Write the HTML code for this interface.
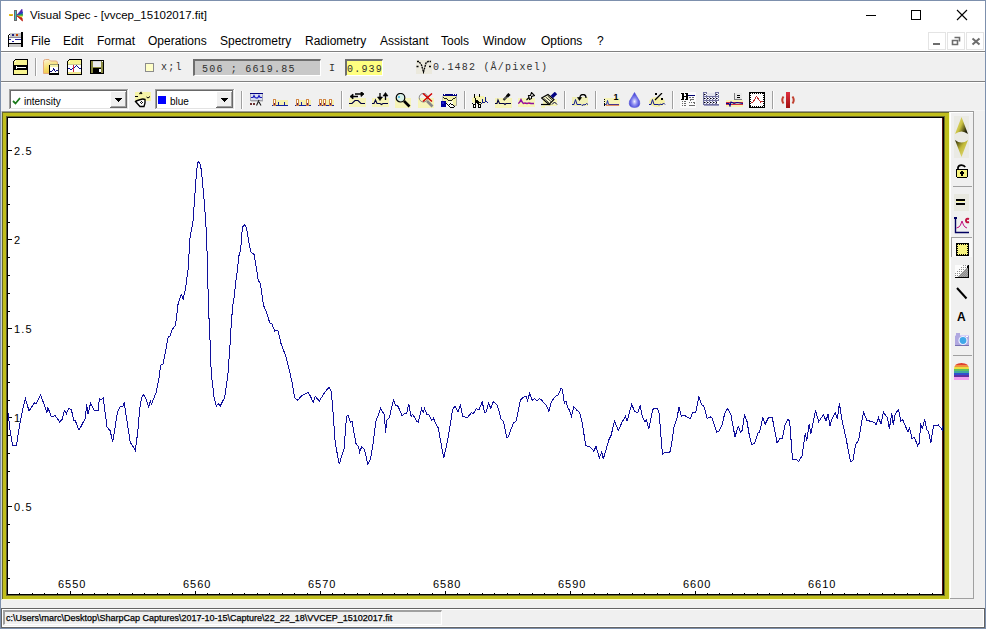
<!DOCTYPE html><html><head><meta charset="utf-8"><style>html,body{margin:0;padding:0;}body{width:986px;height:629px;position:relative;overflow:hidden;background:#f0f0f0;font-family:"Liberation Sans",sans-serif;}</style></head><body>
<div style="position:absolute;left:0px;top:0px;width:986px;height:51px;background:#fff;"></div>
<div style="position:absolute;left:0px;top:51px;width:986px;height:1px;background:#808080;"></div>
<div style="position:absolute;left:0px;top:52px;width:986px;height:1px;background:#fff;"></div>
<div style="position:absolute;left:0px;top:81px;width:986px;height:1px;background:#808080;"></div>
<div style="position:absolute;left:0px;top:82px;width:986px;height:1px;background:#fff;"></div>
<div style="position:absolute;left:0px;top:110px;width:986px;height:1px;background:#f4f4f4;"></div>
<div style="position:absolute;left:30px;top:10px;font-family:'Liberation Sans', sans-serif;font-size:11.5px;line-height:1;color:#000;white-space:pre;">Visual Spec - [vvcep_15102017.fit]</div>
<div style="position:absolute;left:31px;top:35px;font-family:'Liberation Sans', sans-serif;font-size:12px;line-height:1;color:#000;white-space:pre;">File</div>
<div style="position:absolute;left:63px;top:35px;font-family:'Liberation Sans', sans-serif;font-size:12px;line-height:1;color:#000;white-space:pre;">Edit</div>
<div style="position:absolute;left:97px;top:35px;font-family:'Liberation Sans', sans-serif;font-size:12px;line-height:1;color:#000;white-space:pre;">Format</div>
<div style="position:absolute;left:148px;top:35px;font-family:'Liberation Sans', sans-serif;font-size:12px;line-height:1;color:#000;white-space:pre;">Operations</div>
<div style="position:absolute;left:220px;top:35px;font-family:'Liberation Sans', sans-serif;font-size:12px;line-height:1;color:#000;white-space:pre;">Spectrometry</div>
<div style="position:absolute;left:305px;top:35px;font-family:'Liberation Sans', sans-serif;font-size:12px;line-height:1;color:#000;white-space:pre;">Radiometry</div>
<div style="position:absolute;left:380px;top:35px;font-family:'Liberation Sans', sans-serif;font-size:12px;line-height:1;color:#000;white-space:pre;">Assistant</div>
<div style="position:absolute;left:441px;top:35px;font-family:'Liberation Sans', sans-serif;font-size:12px;line-height:1;color:#000;white-space:pre;">Tools</div>
<div style="position:absolute;left:483px;top:35px;font-family:'Liberation Sans', sans-serif;font-size:12px;line-height:1;color:#000;white-space:pre;">Window</div>
<div style="position:absolute;left:541px;top:35px;font-family:'Liberation Sans', sans-serif;font-size:12px;line-height:1;color:#000;white-space:pre;">Options</div>
<div style="position:absolute;left:597px;top:35px;font-family:'Liberation Sans', sans-serif;font-size:12px;line-height:1;color:#000;white-space:pre;">?</div>
<div style="position:absolute;left:866px;top:15px;width:10px;height:1px;background:#000;"></div>
<div style="position:absolute;left:911px;top:10px;width:8px;height:8px;border:1px solid #000;"></div>
<svg style="position:absolute;left:956px;top:9px" width="12" height="12"><path d="M1 1 L11 11 M11 1 L1 11" stroke="#000" stroke-width="1.1"/></svg>
<div style="position:absolute;left:928px;top:32px;width:16px;height:16px;border:1px solid #e4e4e4;"></div>
<div style="position:absolute;left:947px;top:32px;width:16px;height:16px;border:1px solid #e4e4e4;"></div>
<div style="position:absolute;left:966px;top:32px;width:16px;height:16px;border:1px solid #e4e4e4;"></div>
<div style="position:absolute;left:933px;top:43px;width:7px;height:2px;background:#6d6d6d;"></div>
<svg style="position:absolute;left:951px;top:36px" width="10" height="10"><path d="M3.5 1.5 H8.5 V5.5 M1.5 4.5 H6.5 V8.5 H1.5 Z" fill="none" stroke="#6d6d6d" stroke-width="1.6"/></svg>
<svg style="position:absolute;left:971px;top:37px" width="10" height="9"><path d="M1.5 1.5 L8.5 7.5 M8.5 1.5 L1.5 7.5" stroke="#6d6d6d" stroke-width="2"/></svg>
<div style="position:absolute;left:35px;top:58px;width:1px;height:18px;background:#a0a0a0;"></div>
<div style="position:absolute;left:36px;top:58px;width:1px;height:18px;background:#fff;"></div>
<div style="position:absolute;left:145px;top:63px;width:7px;height:7px;border:1px solid #8c8c8c;background:#ffffc8;"></div>
<div style="position:absolute;left:161px;top:63px;font-family:'Liberation Mono', monospace;font-size:10px;line-height:1;color:#303030;white-space:pre;letter-spacing:1.2px;">x;l</div>
<div style="position:absolute;left:193px;top:59px;width:125px;height:14px;border-top:2px solid #6e6e6e;border-left:2px solid #6e6e6e;border-right:1px solid #fff;border-bottom:1px solid #fff;background:#c8c8c8;"></div>
<div style="position:absolute;left:202px;top:65px;font-family:'Liberation Mono', monospace;font-size:10px;line-height:1;color:#303030;white-space:pre;letter-spacing:1.2px;">506 ; 6619.85</div>
<div style="position:absolute;left:329px;top:64px;font-family:'Liberation Mono', monospace;font-size:10px;line-height:1;color:#303030;white-space:pre;">I</div>
<div style="position:absolute;left:345px;top:59px;width:35px;height:14px;border-top:2px solid #6e6e6e;border-left:2px solid #6e6e6e;border-right:1px solid #fff;border-bottom:1px solid #fff;background:#ffff80;"></div>
<div style="position:absolute;left:347px;top:65px;font-family:'Liberation Mono', monospace;font-size:10px;line-height:1;color:#303030;white-space:pre;letter-spacing:1.2px;">0.939</div>
<div style="position:absolute;left:433px;top:63px;font-family:'Liberation Mono', monospace;font-size:10px;line-height:1;color:#303030;white-space:pre;letter-spacing:1.2px;">0.1482 (Å/pixel)</div>
<div style="position:absolute;left:416px;top:60px;width:16px;height:14px;background:#ebe9dd;"></div>
<svg style="position:absolute;left:416px;top:60px" width="16" height="14"><path d="M0.5 6.5 L2.5 6.5 M1 1.5 L3 1.5 L5.5 5 L7.5 12 L10 3 L12 1.5 L15 1.5 M13 6.5 L15.5 6.5" stroke="#000" stroke-width="1.3" fill="none" stroke-dasharray="2 0.7"/></svg>
<div style="position:absolute;left:9px;top:89px;width:120px;height:21px;background:#fff;"></div>
<div style="position:absolute;left:9px;top:89px;width:119px;height:1px;background:#a0a0a0;"></div>
<div style="position:absolute;left:9px;top:89px;width:1px;height:20px;background:#a0a0a0;"></div>
<div style="position:absolute;left:10px;top:90px;width:117px;height:1px;background:#696969;"></div>
<div style="position:absolute;left:10px;top:90px;width:1px;height:18px;background:#696969;"></div>
<div style="position:absolute;left:10px;top:108px;width:118px;height:1px;background:#e3e3e3;"></div>
<div style="position:absolute;left:127px;top:90px;width:1px;height:19px;background:#e3e3e3;"></div>
<div style="position:absolute;left:110px;top:91px;width:17px;height:17px;background:#f0f0f0;"></div>
<div style="position:absolute;left:110px;top:91px;width:16px;height:1px;background:#fff;"></div>
<div style="position:absolute;left:110px;top:91px;width:1px;height:16px;background:#fff;"></div>
<div style="position:absolute;left:110px;top:107px;width:17px;height:1px;background:#696969;"></div>
<div style="position:absolute;left:126px;top:91px;width:1px;height:17px;background:#696969;"></div>
<div style="position:absolute;left:111px;top:106px;width:15px;height:1px;background:#a0a0a0;"></div>
<div style="position:absolute;left:125px;top:92px;width:1px;height:15px;background:#a0a0a0;"></div>
<svg style="position:absolute;left:115px;top:98px" width="8" height="4" shape-rendering="crispEdges"><path d="M0 0 H7 V1 H6 V2 H5 V3 H4 V4 H3 V3 H2 V2 H1 V1 H0 Z" fill="#000"/></svg>
<div style="position:absolute;left:155px;top:89px;width:80px;height:21px;background:#fff;"></div>
<div style="position:absolute;left:155px;top:89px;width:79px;height:1px;background:#a0a0a0;"></div>
<div style="position:absolute;left:155px;top:89px;width:1px;height:20px;background:#a0a0a0;"></div>
<div style="position:absolute;left:156px;top:90px;width:77px;height:1px;background:#696969;"></div>
<div style="position:absolute;left:156px;top:90px;width:1px;height:18px;background:#696969;"></div>
<div style="position:absolute;left:156px;top:108px;width:78px;height:1px;background:#e3e3e3;"></div>
<div style="position:absolute;left:233px;top:90px;width:1px;height:19px;background:#e3e3e3;"></div>
<div style="position:absolute;left:216px;top:91px;width:17px;height:17px;background:#f0f0f0;"></div>
<div style="position:absolute;left:216px;top:91px;width:16px;height:1px;background:#fff;"></div>
<div style="position:absolute;left:216px;top:91px;width:1px;height:16px;background:#fff;"></div>
<div style="position:absolute;left:216px;top:107px;width:17px;height:1px;background:#696969;"></div>
<div style="position:absolute;left:232px;top:91px;width:1px;height:17px;background:#696969;"></div>
<div style="position:absolute;left:217px;top:106px;width:15px;height:1px;background:#a0a0a0;"></div>
<div style="position:absolute;left:231px;top:92px;width:1px;height:15px;background:#a0a0a0;"></div>
<svg style="position:absolute;left:221px;top:98px" width="8" height="4" shape-rendering="crispEdges"><path d="M0 0 H7 V1 H6 V2 H5 V3 H4 V4 H3 V3 H2 V2 H1 V1 H0 Z" fill="#000"/></svg>
<svg style="position:absolute;left:12px;top:97px" width="9" height="8"><path d="M1 4 L3.5 6.5 L8 1" stroke="#1a7a1a" stroke-width="1.8" fill="none"/></svg>
<div style="position:absolute;left:24px;top:97px;font-family:'Liberation Sans', sans-serif;font-size:10px;line-height:1;color:#000;white-space:pre;">intensity</div>
<div style="position:absolute;left:158px;top:96px;width:8px;height:8px;background:#0000ff;"></div>
<div style="position:absolute;left:170px;top:97px;font-family:'Liberation Sans', sans-serif;font-size:10px;line-height:1;color:#000;white-space:pre;">blue</div>
<div style="position:absolute;left:241px;top:91px;width:1px;height:18px;background:#a0a0a0;"></div>
<div style="position:absolute;left:242px;top:91px;width:1px;height:18px;background:#fff;"></div>
<div style="position:absolute;left:341px;top:91px;width:1px;height:18px;background:#a0a0a0;"></div>
<div style="position:absolute;left:342px;top:91px;width:1px;height:18px;background:#fff;"></div>
<div style="position:absolute;left:464px;top:91px;width:1px;height:18px;background:#a0a0a0;"></div>
<div style="position:absolute;left:465px;top:91px;width:1px;height:18px;background:#fff;"></div>
<div style="position:absolute;left:564px;top:91px;width:1px;height:18px;background:#a0a0a0;"></div>
<div style="position:absolute;left:565px;top:91px;width:1px;height:18px;background:#fff;"></div>
<div style="position:absolute;left:595px;top:91px;width:1px;height:18px;background:#a0a0a0;"></div>
<div style="position:absolute;left:596px;top:91px;width:1px;height:18px;background:#fff;"></div>
<div style="position:absolute;left:672px;top:91px;width:1px;height:18px;background:#a0a0a0;"></div>
<div style="position:absolute;left:673px;top:91px;width:1px;height:18px;background:#fff;"></div>
<div style="position:absolute;left:772px;top:91px;width:1px;height:18px;background:#a0a0a0;"></div>
<div style="position:absolute;left:773px;top:91px;width:1px;height:18px;background:#fff;"></div>
<div style="position:absolute;left:1px;top:111px;width:973px;height:1px;background:#9a9a9a;"></div>
<div style="position:absolute;left:1px;top:111px;width:1px;height:489px;background:#c8d0d0;"></div>
<div style="position:absolute;left:2px;top:112px;width:948px;height:488px;background:#c0be1c;"></div>
<div style="position:absolute;left:2px;top:112px;width:948px;height:1px;background:#6a6a28;"></div>
<div style="position:absolute;left:2px;top:112px;width:1px;height:487px;background:#6a6a28;"></div>
<div style="position:absolute;left:949px;top:112px;width:1px;height:488px;background:#ffffd0;"></div>
<div style="position:absolute;left:2px;top:599px;width:948px;height:1px;background:#ffffd0;"></div>
<div style="position:absolute;left:7px;top:117px;width:937px;height:478px;background:#000;"></div>
<div style="position:absolute;left:8px;top:118px;width:934px;height:476px;background:#fff;"></div>
<div style="position:absolute;left:942px;top:118px;width:1px;height:476px;background:#5a1010;"></div>
<div style="position:absolute;left:6px;top:116px;width:939px;height:1px;background:#6a6a28;"></div>
<div style="position:absolute;left:6px;top:116px;width:1px;height:480px;background:#5e5a30;"></div>
<div style="position:absolute;left:944px;top:117px;width:1px;height:478px;background:#6a6a28;"></div>
<div style="position:absolute;left:6px;top:595px;width:939px;height:1px;background:#6a6a28;"></div>
<div style="position:absolute;left:950px;top:112px;width:23px;height:486px;background:#f0f0f0;border-top:1px solid #fff;border-left:1px solid #fff;box-sizing:border-box;"></div>
<div style="position:absolute;left:973px;top:112px;width:1px;height:487px;background:#a0a0a0;"></div>
<div style="position:absolute;left:950px;top:598px;width:24px;height:1px;background:#a0a0a0;"></div>
<div style="position:absolute;left:1px;top:608px;width:982px;height:18px;border:1px solid #646464;"></div>
<div style="position:absolute;left:2px;top:609px;width:980px;height:16px;border:1px solid #fff;"></div>
<div style="position:absolute;left:3px;top:610px;width:436px;height:12px;border-top:2px solid #a0a0a0;border-left:2px solid #a0a0a0;border-right:1px solid #fff;border-bottom:1px solid #fff;"></div>
<div style="position:absolute;left:6px;top:614px;font-family:'Liberation Sans', sans-serif;font-size:9px;line-height:1;color:#000;white-space:pre;-webkit-text-stroke:0.25px #000;">c:\Users\marc\Desktop\SharpCap Captures\2017-10-15\Capture\22_22_18\VVCEP_15102017.fit</div>
<svg style="position:absolute;left:5px;top:5px" width="22" height="20" viewBox="0 0 22 20"><rect x="4" y="9" width="4" height="2" fill="#e8c020"/><rect x="5" y="10" width="2" height="1" fill="#d0a000"/><rect x="9" y="5" width="3" height="11" fill="#686868"/><rect x="10" y="6" width="1" height="9" fill="#40c0c0"/><path d="M12 10 L17 4 L17.5 8 Z" stroke="#5020b0" stroke-width="0.5" fill="#5020b0" /><path d="M12 10 L17.5 7 L17.5 9.5 Z" stroke="#2040c0" stroke-width="0.5" fill="#2040c0" /><path d="M12 10.5 L17.5 9 L17.5 11 Z" stroke="#20a040" stroke-width="0.5" fill="#20a040" /><path d="M12 11 L17.5 11 L17 12.5 Z" stroke="#e0e040" stroke-width="0.5" fill="#e0e040" /><path d="M12 11 L17 13 L17.5 16 Z" stroke="#c02010" stroke-width="0.8" fill="#c02010" /></svg><svg style="position:absolute;left:8px;top:32px" width="15" height="15" viewBox="0 0 15 15" shape-rendering="crispEdges"><rect x="2" y="1" width="11" height="5" fill="#c8c8c8"/><rect x="1" y="2" width="1" height="1" fill="#000"/><rect x="0" y="3" width="1" height="1" fill="#000"/><rect x="4" y="2" width="2" height="2" fill="#202080"/><rect x="8" y="2" width="2" height="2" fill="#c04000"/><rect x="1" y="5" width="12" height="1" fill="#9090a0"/><rect x="1" y="6" width="12" height="5" fill="#fff"/><rect x="1" y="7" width="2" height="1" fill="#2020a0"/><rect x="7" y="7" width="6" height="1" fill="#2020a0"/><rect x="4" y="9" width="2" height="1" fill="#2020a0"/><rect x="1" y="11" width="12" height="1" fill="#000"/><rect x="1" y="12" width="12" height="3" fill="#c8c8c8"/><rect x="0" y="4" width="1" height="11" fill="#000"/><rect x="13" y="0" width="2" height="15" fill="#000"/></svg><svg style="position:absolute;left:13px;top:59px" width="15" height="16" viewBox="0 0 15 16" shape-rendering="crispEdges"><rect x="0" y="2" width="1" height="14" fill="#000"/><rect x="1" y="1" width="1" height="1" fill="#000"/><rect x="2" y="0" width="13" height="1" fill="#000"/><rect x="14" y="0" width="1" height="16" fill="#000"/><rect x="0" y="15" width="15" height="1" fill="#000"/><rect x="1" y="2" width="13" height="13" fill="#f8f490"/><rect x="2" y="1" width="12" height="1" fill="#f8f490"/><rect x="2" y="2" width="1" height="1" fill="#fff"/><rect x="1" y="6" width="13" height="5" fill="#000"/><rect x="3" y="8" width="10" height="1" fill="#fff"/><rect x="3" y="7" width="1" height="3" fill="#fff"/></svg><svg style="position:absolute;left:43px;top:59px" width="16" height="16" viewBox="0 0 16 16"><defs><linearGradient id="fg" x1="0" y1="0" x2="0.3" y2="1"><stop offset="0" stop-color="#fbf3d8"/><stop offset="0.6" stop-color="#f6e070"/><stop offset="1" stop-color="#f0c850"/></linearGradient></defs><path d="M0.5 14.5 L0.5 2.5 Q0.5 0.5 2.5 0.5 L6 0.5 L7.5 2 L13 2 Q14.5 2 14.5 4 L14.5 14.5 Z" stroke="#e4ac80" stroke-width="1" fill="url(#fg)" /></svg><svg style="position:absolute;left:43px;top:59px" width="16" height="16" viewBox="0 0 16 16" shape-rendering="crispEdges"><rect x="7" y="5" width="8" height="1" fill="#a0a070"/><rect x="6" y="6" width="1" height="1" fill="#000"/><rect x="7" y="6" width="8" height="2" fill="#f8f4a8"/><rect x="6" y="7" width="1" height="8" fill="#000"/><rect x="7" y="8" width="8" height="6" fill="#fff"/><rect x="15" y="5" width="1" height="11" fill="#303030"/><rect x="6" y="14" width="10" height="2" fill="#000"/><rect x="7" y="12" width="2" height="1" fill="#101080"/><rect x="9" y="11" width="1" height="1" fill="#101080"/><rect x="10" y="9" width="1" height="2" fill="#101080"/><rect x="11" y="10" width="1" height="2" fill="#101080"/><rect x="12" y="12" width="1" height="1" fill="#101080"/><rect x="13" y="11" width="2" height="1" fill="#101080"/></svg><svg style="position:absolute;left:67px;top:59px" width="15" height="16" viewBox="0 0 15 16" shape-rendering="crispEdges"><rect x="0" y="2" width="1" height="14" fill="#000"/><rect x="1" y="1" width="1" height="1" fill="#000"/><rect x="2" y="0" width="13" height="1" fill="#000"/><rect x="14" y="0" width="1" height="16" fill="#000"/><rect x="0" y="15" width="15" height="1" fill="#000"/><rect x="1" y="2" width="13" height="13" fill="#f8f490"/><rect x="2" y="1" width="12" height="1" fill="#f8f490"/><rect x="2" y="2" width="1" height="1" fill="#fff"/><rect x="1" y="5" width="13" height="1" fill="#c8c890"/><rect x="1" y="6" width="13" height="7" fill="#fff"/><rect x="1" y="9" width="2" height="1" fill="#101090"/><rect x="3" y="10" width="2" height="1" fill="#101090"/><rect x="5" y="9" width="2" height="1" fill="#101090"/><rect x="7" y="8" width="1" height="1" fill="#101090"/><rect x="8" y="7" width="1" height="1" fill="#101090"/><rect x="9" y="6" width="1" height="1" fill="#101090"/><rect x="10" y="7" width="1" height="1" fill="#101090"/><rect x="11" y="8" width="1" height="1" fill="#101090"/><rect x="12" y="9" width="2" height="1" fill="#101090"/><rect x="6" y="6" width="1" height="7" fill="#d02040"/><rect x="1" y="13" width="13" height="2" fill="#f0e890"/></svg><svg style="position:absolute;left:90px;top:60px" width="14" height="14" viewBox="0 0 14 14" shape-rendering="crispEdges"><rect x="0" y="0" width="14" height="14" fill="#000"/><rect x="1" y="1" width="12" height="12" fill="#8a8a40"/><rect x="3" y="1" width="8" height="6" fill="#ececec"/><rect x="3" y="1" width="8" height="1" fill="#d8d8d8"/><rect x="3" y="8" width="8" height="6" fill="#000"/><rect x="9" y="9" width="2" height="3" fill="#fff"/><rect x="12" y="1" width="1" height="1" fill="#fff"/></svg><svg style="position:absolute;left:134px;top:91px" width="18" height="17" viewBox="0 0 18 17"><rect x="1" y="1" width="16" height="9" fill="#f6f4a8"/><path d="M3.5 9.5 Q2 10 1.5 10.5 L6 15.5 L10 15.5 Q11.5 12 11 8.5 Q9 7.5 6.5 8.5 Z" stroke="#000" stroke-width="1.4" fill="#fff" /><path d="M1 5.5 L4 5.5 M5.5 3 L7 1.5 L8 3" stroke="#000" stroke-width="1.2" fill="none" /><path d="M6 11 L8 13 M7 10 L9 12" stroke="#000" stroke-width="0.9" fill="none" /><path d="M12.5 6 L14 7 L16 5.5" stroke="#000" stroke-width="1" fill="none" /></svg><svg style="position:absolute;left:249px;top:92px" width="15" height="15" viewBox="0 0 15 15"><rect x="1" y="1" width="13" height="8" fill="#d8def0"/><rect x="1" y="1" width="13" height="1" fill="#000080"/><rect x="1" y="2" width="1" height="7" fill="#a8a8b8"/><rect x="13" y="2" width="1" height="7" fill="#a8a8b8"/><rect x="1" y="8" width="13" height="1" fill="#a0a0a8"/><rect x="2" y="9" width="12" height="1" fill="#d0d0d0"/><path d="M2 5.5 L4 5.5 L5 3.5 L6 5.5 L8 6 L9 5.5 L10 3.5 L11 5.5 L13 5.5" stroke="#1818c0" stroke-width="1.2" fill="none" /><rect x="1" y="11" width="2" height="2" fill="#6a3030"/><rect x="4" y="11" width="2" height="2" fill="#6a3030"/><path d="M7.5 13.5 L10 8 M10 10 L12 13.5" stroke="#202020" stroke-width="1.1" fill="none" /></svg><svg style="position:absolute;left:272px;top:99px" width="16" height="8" viewBox="0 0 16 8" shape-rendering="crispEdges"><rect x="4" y="1" width="12" height="5" fill="#f4f0b0"/><path d="M0 6.5 L16 6.5" stroke="#1020a0" stroke-width="1" fill="none" /><rect x="1" y="0" width="3" height="7" fill="#d08848"/><rect x="2" y="1" width="1" height="3" fill="#fff"/><rect x="2" y="4" width="1" height="2" fill="#602060"/><path d="M6.5 3 L6.5 6 M12.5 3 L12.5 6" stroke="#1020a0" stroke-width="1" fill="none" /></svg><svg style="position:absolute;left:295px;top:99px" width="16" height="8" viewBox="0 0 16 8" shape-rendering="crispEdges"><rect x="4" y="1" width="12" height="5" fill="#f4f0b0"/><path d="M0 6.5 L16 6.5" stroke="#1020a0" stroke-width="1" fill="none" /><rect x="1" y="0" width="3" height="7" fill="#d08848"/><rect x="2" y="1" width="1" height="3" fill="#fff"/><rect x="2" y="4" width="1" height="2" fill="#602060"/><rect x="11" y="0" width="3" height="7" fill="#d08848"/><rect x="12" y="1" width="1" height="3" fill="#fff"/><rect x="12" y="4" width="1" height="2" fill="#602060"/><path d="M6.5 3 L6.5 6" stroke="#1020a0" stroke-width="1" fill="none" /></svg><svg style="position:absolute;left:318px;top:99px" width="16" height="8" viewBox="0 0 16 8" shape-rendering="crispEdges"><rect x="4" y="1" width="12" height="5" fill="#f4f0b0"/><path d="M0 6.5 L16 6.5" stroke="#1020a0" stroke-width="1" fill="none" /><rect x="1" y="0" width="3" height="7" fill="#d08848"/><rect x="2" y="1" width="1" height="3" fill="#fff"/><rect x="2" y="4" width="1" height="2" fill="#602060"/><rect x="5" y="0" width="3" height="7" fill="#d08848"/><rect x="6" y="1" width="1" height="3" fill="#fff"/><rect x="6" y="4" width="1" height="2" fill="#602060"/><rect x="11" y="0" width="3" height="7" fill="#d08848"/><rect x="12" y="1" width="1" height="3" fill="#fff"/><rect x="12" y="4" width="1" height="2" fill="#602060"/></svg><svg style="position:absolute;left:349px;top:92px" width="17" height="16" viewBox="0 0 17 16"><rect x="0" y="6" width="17" height="9" fill="#f6f4b8"/><path d="M3 4.5 L9 4.5 M6 2 L13 2" stroke="#000" stroke-width="1.3" fill="none" /><path d="M1 4.5 L4 2 L4 7 Z" stroke="#000" stroke-width="0.8" fill="#000" /><path d="M15 2 L12 -0.5 L12 4.5 Z" stroke="#000" stroke-width="0.8" fill="#000" /><path d="M0 11.5 L3 11.5 L6 8.5 L9 8.5 L12 11.5 L16 11.5" stroke="#000040" stroke-width="1.1" fill="none" /></svg><svg style="position:absolute;left:372px;top:92px" width="17" height="16" viewBox="0 0 17 16"><rect x="0" y="6" width="17" height="9" fill="#f6f4b8"/><path d="M8 1 L8 6 M13.5 3 L13.5 8" stroke="#000" stroke-width="1.3" fill="none" /><path d="M5.5 5 L10.5 5 L8 8.5 Z" stroke="#000" stroke-width="0.6" fill="#000" /><path d="M11 4 L16 4 L13.5 0.5 Z" stroke="#000" stroke-width="0.6" fill="#000" /><path d="M0 11.5 L2 11.5 L3.5 8 L5 11.5 L8 11.5 L9.5 12.5 L11 11.5 L16 11.5" stroke="#000040" stroke-width="1.1" fill="none" /></svg><svg style="position:absolute;left:395px;top:93px" width="17" height="16" viewBox="0 0 17 16"><rect x="0" y="5" width="16" height="10" fill="#f6f4b8"/><circle cx="5.5" cy="4.7" r="4.3" fill="#d8f0e8" stroke="#000" stroke-width="1.2"/><rect x="3" y="3" width="2" height="2" fill="#60c0e0"/><path d="M9 8 L14.5 13.5" stroke="#000" stroke-width="2.6" fill="none" /></svg><svg style="position:absolute;left:418px;top:93px" width="17" height="16" viewBox="0 0 17 16"><rect x="0" y="5" width="16" height="10" fill="#f6f4b8"/><circle cx="5.5" cy="4.7" r="4.3" fill="none" stroke="#888" stroke-width="1"/><path d="M9 8 L14.5 13.5" stroke="#888" stroke-width="2.6" fill="none" /><path d="M5 0.5 L14 8.5 M14 0.5 L5 8.5" stroke="#d00000" stroke-width="1.5" fill="none" /></svg><svg style="position:absolute;left:441px;top:92px" width="17" height="17" viewBox="0 0 17 17" shape-rendering="crispEdges"><rect x="2" y="4" width="14" height="10" fill="#f4f2a8"/><rect x="15" y="4" width="1" height="10" fill="#a8a8a0"/><rect x="2" y="13" width="14" height="1" fill="#c0c0a0"/><rect x="1" y="4" width="1" height="6" fill="#c8c8c8"/><rect x="2" y="2" width="14" height="2" fill="#000080"/><rect x="3" y="2" width="1" height="1" fill="#fff"/><rect x="12" y="2" width="1" height="1" fill="#fff"/><rect x="14" y="2" width="1" height="1" fill="#fff"/><rect x="2" y="5" width="1" height="1" fill="#202020"/><rect x="3" y="6" width="1" height="1" fill="#202020"/><rect x="4" y="6" width="1" height="1" fill="#202020"/><rect x="5" y="6" width="1" height="1" fill="#202020"/><rect x="6" y="7" width="1" height="1" fill="#202020"/><rect x="7" y="8" width="1" height="1" fill="#202020"/><rect x="8" y="8" width="1" height="1" fill="#202020"/><rect x="9" y="8" width="1" height="1" fill="#202020"/><rect x="10" y="8" width="1" height="1" fill="#202020"/><rect x="11" y="7" width="1" height="1" fill="#202020"/><rect x="12" y="6" width="1" height="1" fill="#202020"/><rect x="13" y="6" width="1" height="1" fill="#202020"/><rect x="14" y="5" width="1" height="1" fill="#202020"/><rect x="7" y="9" width="5" height="2" fill="#fbfbe0"/><rect x="0" y="9" width="5" height="6" fill="#0000a0"/><rect x="1" y="10" width="2" height="2" fill="#2020d0"/><rect x="5" y="11" width="7" height="4" fill="#fff"/><rect x="5" y="11" width="1" height="1" fill="#000"/><rect x="6" y="12" width="1" height="1" fill="#000"/><rect x="7" y="13" width="1" height="1" fill="#000"/><rect x="8" y="14" width="1" height="1" fill="#000"/><rect x="9" y="15" width="1" height="1" fill="#000"/><rect x="10" y="15" width="1" height="1" fill="#000"/><rect x="11" y="15" width="1" height="1" fill="#000"/><rect x="12" y="15" width="1" height="1" fill="#000"/><rect x="13" y="14" width="1" height="1" fill="#000"/><rect x="12" y="13" width="1" height="1" fill="#000"/><rect x="11" y="12" width="1" height="1" fill="#000"/><rect x="10" y="12" width="1" height="1" fill="#000"/><rect x="9" y="11" width="1" height="1" fill="#000"/><rect x="8" y="12" width="1" height="1" fill="#000"/></svg><svg style="position:absolute;left:471px;top:92px" width="18" height="17" viewBox="0 0 18 17" shape-rendering="crispEdges"><ellipse cx="8.5" cy="8" rx="8" ry="4.5" fill="#f6f4b0"/><rect x="3" y="2" width="1" height="4" fill="#000"/><rect x="4" y="6" width="1" height="3" fill="#000"/><rect x="8" y="2" width="1" height="3" fill="#000"/><rect x="4" y="9" width="4" height="3" fill="#000"/><rect x="5" y="8" width="2" height="1" fill="#000"/><rect x="5" y="11" width="1" height="1" fill="#fff"/><rect x="1" y="11" width="1" height="1" fill="#000"/><rect x="2" y="12" width="3" height="1" fill="#000"/><rect x="2" y="15" width="3" height="1" fill="#000"/><rect x="2" y="13" width="1" height="2" fill="#000"/><rect x="4" y="13" width="1" height="2" fill="#000"/><rect x="3" y="13" width="1" height="2" fill="#fff"/><rect x="7" y="12" width="3" height="1" fill="#000"/><rect x="7" y="15" width="3" height="1" fill="#000"/><rect x="7" y="13" width="1" height="2" fill="#000"/><rect x="9" y="13" width="1" height="2" fill="#000"/><rect x="8" y="13" width="1" height="2" fill="#fff"/><rect x="8" y="10" width="2" height="1" fill="#000"/><rect x="10" y="11" width="1" height="1" fill="#101890"/><rect x="11" y="7" width="1" height="4" fill="#101890"/><rect x="12" y="10" width="2" height="1" fill="#101890"/><rect x="14" y="5" width="1" height="5" fill="#101890"/><rect x="15" y="9" width="1" height="1" fill="#101890"/><rect x="16" y="10" width="1" height="1" fill="#101890"/></svg><svg style="position:absolute;left:495px;top:93px" width="17" height="15" viewBox="0 0 17 15"><rect x="0" y="5" width="17" height="10" fill="#f6f4b8"/><path d="M0 10.5 L2 10.5 L3 7 L4.5 10.5 L9 10.5 L10 11.5 L11 10.5 L16 10.5" stroke="#000040" stroke-width="1.1" fill="none" /><path d="M8.5 7 L12 3.5" stroke="#000" stroke-width="2.2" fill="none" /><path d="M9 6.5 L11.5 4" stroke="#fff" stroke-width="0.7" fill="none" /><path d="M12 3.5 L14.5 1" stroke="#000" stroke-width="3" fill="none" /></svg><svg style="position:absolute;left:518px;top:92px" width="17" height="16" viewBox="0 0 17 16"><rect x="0" y="6" width="17" height="9" fill="#f6f4b8"/><path d="M0 11.5 L1.5 10.5 L3 7.5 L4.5 10.5 L5.5 11.5 L7 11 L9 11.5 L11 11 L13 11.5 L16 11.5" stroke="#9010a0" stroke-width="1.4" fill="none" /><rect x="6" y="11" width="1" height="1" fill="#e02060"/><rect x="10" y="11" width="1" height="1" fill="#e02060"/><path d="M8.5 8 L11 5.5" stroke="#000" stroke-width="1.1" fill="none" /><path d="M10.5 3.5 L12.5 3.5 L13.5 0.5 L16.5 3.5 L13.5 4.5 L13.5 6.5 L11.5 7.5 Z" stroke="#000" stroke-width="1.1" fill="#fff" /></svg><svg style="position:absolute;left:541px;top:92px" width="17" height="16" viewBox="0 0 17 16"><rect x="0" y="14" width="4" height="2" fill="#f6f4b8"/><rect x="2" y="7" width="14" height="7" fill="#f6f4b8"/><path d="M0.5 6 L7 2.5 L13 7.5 L8 12.5 Z" stroke="#000" stroke-width="1.1" fill="#fafad0" /><path d="M2.5 6.2 L8.2 11 M4.6 5 L10 9.5 M6.6 4 L11.5 8.2" stroke="#000" stroke-width="0.8" fill="none" /><path d="M10.8 5 L15 1" stroke="#000080" stroke-width="3.4" fill="none" /><path d="M0 12.5 L9.5 12.5" stroke="#000" stroke-width="1.2" fill="none" /><path d="M11 12.5 L13.5 10 L16 12.5" stroke="#000040" stroke-width="1" fill="none" /></svg><svg style="position:absolute;left:572px;top:94px" width="17" height="13" viewBox="0 0 17 13"><rect x="0" y="3" width="16" height="9" fill="#f0f0b8"/><path d="M0 10.5 L2 10.5 L3.5 5.5 L5 10.5 L9 10.5 L10 11.5 L12 10.5 L13 11 L14.5 9.5 L16 10.5" stroke="#101890" stroke-width="1" fill="none" /><path d="M8 5 Q7.5 0.5 11 0.5 Q14 0.5 14 4" stroke="#000" stroke-width="1.3" fill="none" /><path d="M5.5 3.5 L9.5 3.5 L7.5 6.5 Z" stroke="#000" stroke-width="0.6" fill="#000" /></svg><svg style="position:absolute;left:603px;top:93px" width="17" height="14" viewBox="0 0 17 14"><rect x="1" y="5" width="16" height="8" fill="#f6f4b8"/><text x="10.5" y="7" font-family="Liberation Sans" font-weight="bold" font-size="9" fill="#000">1</text><rect x="1" y="6" width="1" height="1" fill="#000"/><rect x="1" y="8" width="1" height="1" fill="#000"/><rect x="1" y="10" width="1" height="3" fill="#000"/><path d="M2 11.5 L3.5 11.5 L4.5 7.5 L5.5 11.5 L16 11.5" stroke="#2030b0" stroke-width="1" fill="none" /><path d="M3 12.2 L16 12.2" stroke="#d04020" stroke-width="0.8" fill="none" /></svg><svg style="position:absolute;left:628px;top:92px" width="13" height="16" viewBox="0 0 13 16"><defs><radialGradient id="dg" cx="0.5" cy="0.6" r="0.5"><stop offset="0" stop-color="#f0f0ff"/><stop offset="0.5" stop-color="#8888f0"/><stop offset="1" stop-color="#4848d8"/></radialGradient></defs><path d="M6.5 0.5 Q9 5 11.5 9 Q13 15.5 6.5 15.5 Q0 15.5 1.5 9 Q4 5 6.5 0.5 Z" stroke="#5050d8" stroke-width="0.6" fill="url(#dg)" /></svg><svg style="position:absolute;left:649px;top:93px" width="17" height="14" viewBox="0 0 17 14"><ellipse cx="8" cy="9" rx="8" ry="5" fill="#f4f0a8"/><rect x="6" y="0" width="2" height="2" fill="#000"/><rect x="12" y="5" width="2" height="2" fill="#000"/><path d="M6 7 L13 0" stroke="#000" stroke-width="1.2" fill="none" /><path d="M0 11.5 L2 11.5 L3.5 6.5 L5 11.5 L9 11.5 L10 12 L12 11 L13 12 L14.5 10 L16 11.5" stroke="#101890" stroke-width="1" fill="none" /></svg><svg style="position:absolute;left:680px;top:92px" width="16" height="16" viewBox="0 0 16 16" shape-rendering="crispEdges"><rect x="0" y="0" width="16" height="16" fill="#fbfbfb"/><rect x="1" y="1" width="3" height="1" fill="#000"/><rect x="5" y="1" width="3" height="1" fill="#000"/><rect x="2" y="1" width="2" height="7" fill="#000"/><rect x="6" y="1" width="2" height="7" fill="#000"/><rect x="2" y="4" width="6" height="1" fill="#000"/><rect x="1" y="7" width="3" height="1" fill="#000"/><rect x="5" y="7" width="3" height="1" fill="#000"/><rect x="8" y="3" width="7" height="1" fill="#000070"/><rect x="9" y="5" width="2" height="1" fill="#6a6a6a"/><rect x="12" y="5" width="2" height="1" fill="#6a6a6a"/><rect x="10" y="7" width="4" height="1" fill="#6a6a6a"/><rect x="10" y="8" width="1" height="1" fill="#6a6a6a"/><rect x="2" y="9" width="1" height="1" fill="#6a6a6a"/><rect x="4" y="9" width="2" height="1" fill="#6a6a6a"/><rect x="2" y="11" width="1" height="1" fill="#6a6a6a"/><rect x="4" y="11" width="2" height="1" fill="#6a6a6a"/><rect x="2" y="13" width="1" height="1" fill="#6a6a6a"/><rect x="4" y="13" width="2" height="1" fill="#6a6a6a"/><rect x="9" y="10" width="1" height="1" fill="#6a6a6a"/><rect x="11" y="10" width="1" height="1" fill="#6a6a6a"/><rect x="13" y="10" width="2" height="1" fill="#6a6a6a"/><rect x="14" y="11" width="1" height="1" fill="#6a6a6a"/><rect x="9" y="13" width="6" height="1" fill="#6a6a6a"/></svg><svg style="position:absolute;left:703px;top:92px" width="16" height="15" viewBox="0 0 16 15" shape-rendering="crispEdges"><rect x="0" y="0" width="4" height="4" fill="#70709e"/><rect x="12" y="0" width="4" height="4" fill="#70709e"/><rect x="0" y="4" width="16" height="9" fill="#70709e"/><rect x="1" y="13" width="15" height="1" fill="#9898c0"/><rect x="4" y="1" width="8" height="3" fill="#e4e4ec"/><rect x="1" y="2" width="1" height="1" fill="#000"/><rect x="2" y="1" width="1" height="1" fill="#fff"/><rect x="3" y="2" width="1" height="1" fill="#fff"/><rect x="2" y="3" width="1" height="1" fill="#fff"/><rect x="1" y="1" width="1" height="1" fill="#d8d8e8"/><rect x="1" y="3" width="1" height="1" fill="#d8d8e8"/><rect x="13" y="2" width="1" height="1" fill="#000"/><rect x="14" y="1" width="1" height="1" fill="#fff"/><rect x="15" y="2" width="1" height="1" fill="#fff"/><rect x="14" y="3" width="1" height="1" fill="#fff"/><rect x="13" y="1" width="1" height="1" fill="#d8d8e8"/><rect x="13" y="3" width="1" height="1" fill="#d8d8e8"/><rect x="1" y="6" width="1" height="1" fill="#000"/><rect x="2" y="5" width="1" height="1" fill="#fff"/><rect x="3" y="6" width="1" height="1" fill="#fff"/><rect x="2" y="7" width="1" height="1" fill="#fff"/><rect x="1" y="5" width="1" height="1" fill="#d8d8e8"/><rect x="1" y="7" width="1" height="1" fill="#d8d8e8"/><rect x="4" y="6" width="1" height="1" fill="#000"/><rect x="5" y="5" width="1" height="1" fill="#fff"/><rect x="6" y="6" width="1" height="1" fill="#fff"/><rect x="5" y="7" width="1" height="1" fill="#fff"/><rect x="4" y="5" width="1" height="1" fill="#d8d8e8"/><rect x="4" y="7" width="1" height="1" fill="#d8d8e8"/><rect x="7" y="6" width="1" height="1" fill="#000"/><rect x="8" y="5" width="1" height="1" fill="#fff"/><rect x="9" y="6" width="1" height="1" fill="#fff"/><rect x="8" y="7" width="1" height="1" fill="#fff"/><rect x="7" y="5" width="1" height="1" fill="#d8d8e8"/><rect x="7" y="7" width="1" height="1" fill="#d8d8e8"/><rect x="10" y="6" width="1" height="1" fill="#000"/><rect x="11" y="5" width="1" height="1" fill="#fff"/><rect x="12" y="6" width="1" height="1" fill="#fff"/><rect x="11" y="7" width="1" height="1" fill="#fff"/><rect x="10" y="5" width="1" height="1" fill="#d8d8e8"/><rect x="10" y="7" width="1" height="1" fill="#d8d8e8"/><rect x="13" y="6" width="1" height="1" fill="#000"/><rect x="14" y="5" width="1" height="1" fill="#fff"/><rect x="15" y="6" width="1" height="1" fill="#fff"/><rect x="14" y="7" width="1" height="1" fill="#fff"/><rect x="13" y="5" width="1" height="1" fill="#d8d8e8"/><rect x="13" y="7" width="1" height="1" fill="#d8d8e8"/><rect x="1" y="10" width="1" height="1" fill="#000"/><rect x="2" y="9" width="1" height="1" fill="#fff"/><rect x="3" y="10" width="1" height="1" fill="#fff"/><rect x="2" y="11" width="1" height="1" fill="#fff"/><rect x="1" y="9" width="1" height="1" fill="#d8d8e8"/><rect x="1" y="11" width="1" height="1" fill="#d8d8e8"/><rect x="4" y="10" width="1" height="1" fill="#000"/><rect x="5" y="9" width="1" height="1" fill="#fff"/><rect x="6" y="10" width="1" height="1" fill="#fff"/><rect x="5" y="11" width="1" height="1" fill="#fff"/><rect x="4" y="9" width="1" height="1" fill="#d8d8e8"/><rect x="4" y="11" width="1" height="1" fill="#d8d8e8"/><rect x="7" y="10" width="1" height="1" fill="#000"/><rect x="8" y="9" width="1" height="1" fill="#fff"/><rect x="9" y="10" width="1" height="1" fill="#fff"/><rect x="8" y="11" width="1" height="1" fill="#fff"/><rect x="7" y="9" width="1" height="1" fill="#d8d8e8"/><rect x="7" y="11" width="1" height="1" fill="#d8d8e8"/><rect x="10" y="10" width="1" height="1" fill="#000"/><rect x="11" y="9" width="1" height="1" fill="#fff"/><rect x="12" y="10" width="1" height="1" fill="#fff"/><rect x="11" y="11" width="1" height="1" fill="#fff"/><rect x="10" y="9" width="1" height="1" fill="#d8d8e8"/><rect x="10" y="11" width="1" height="1" fill="#d8d8e8"/><rect x="13" y="10" width="1" height="1" fill="#000"/><rect x="14" y="9" width="2" height="3" fill="#fff"/></svg><svg style="position:absolute;left:726px;top:93px" width="17" height="14" viewBox="0 0 17 14"><rect x="8" y="0" width="8" height="6" fill="#e8e8e8"/><rect x="8" y="0" width="1" height="7" fill="#808080"/><rect x="8" y="6" width="8" height="1" fill="#808080"/><rect x="11" y="2" width="3" height="1" fill="#000"/><rect x="11" y="4" width="3" height="1" fill="#000"/><rect x="0" y="7" width="17" height="7" fill="#f6f4b8"/><rect x="0" y="9" width="17" height="1" fill="#d03040"/><rect x="0" y="11" width="17" height="1" fill="#d03040"/><path d="M0 10.5 L3 10.5 L4 13 L5 9 L8 10.5 L11 9.5 L17 10.5" stroke="#000090" stroke-width="1.1" fill="none" /></svg><svg style="position:absolute;left:749px;top:92px" width="16" height="16" viewBox="0 0 16 16" shape-rendering="crispEdges"><rect x="0" y="0" width="16" height="16" fill="#000"/><rect x="1" y="1" width="14" height="14" fill="#fff"/><rect x="1" y="1" width="1" height="1" fill="#000"/><rect x="1" y="14" width="1" height="1" fill="#000"/><rect x="1" y="1" width="1" height="1" fill="#000"/><rect x="14" y="1" width="1" height="1" fill="#000"/><rect x="3" y="1" width="1" height="1" fill="#000"/><rect x="3" y="14" width="1" height="1" fill="#000"/><rect x="1" y="3" width="1" height="1" fill="#000"/><rect x="14" y="3" width="1" height="1" fill="#000"/><rect x="5" y="1" width="1" height="1" fill="#000"/><rect x="5" y="14" width="1" height="1" fill="#000"/><rect x="1" y="5" width="1" height="1" fill="#000"/><rect x="14" y="5" width="1" height="1" fill="#000"/><rect x="7" y="1" width="1" height="1" fill="#000"/><rect x="7" y="14" width="1" height="1" fill="#000"/><rect x="1" y="7" width="1" height="1" fill="#000"/><rect x="14" y="7" width="1" height="1" fill="#000"/><rect x="9" y="1" width="1" height="1" fill="#000"/><rect x="9" y="14" width="1" height="1" fill="#000"/><rect x="1" y="9" width="1" height="1" fill="#000"/><rect x="14" y="9" width="1" height="1" fill="#000"/><rect x="11" y="1" width="1" height="1" fill="#000"/><rect x="11" y="14" width="1" height="1" fill="#000"/><rect x="1" y="11" width="1" height="1" fill="#000"/><rect x="14" y="11" width="1" height="1" fill="#000"/><rect x="13" y="1" width="1" height="1" fill="#000"/><rect x="13" y="14" width="1" height="1" fill="#000"/><rect x="1" y="13" width="1" height="1" fill="#000"/><rect x="14" y="13" width="1" height="1" fill="#000"/><path d="M2 11 L4 10 L7.5 4.5 L11.5 10 L14 9" stroke="#c03030" stroke-width="1" fill="none" /></svg><svg style="position:absolute;left:780px;top:92px" width="17" height="16" viewBox="0 0 17 16"><defs><linearGradient id="rg" x1="0" x2="0" y1="0" y2="1"><stop offset="0" stop-color="#e03040"/><stop offset="1" stop-color="#a01010"/></linearGradient></defs><rect x="6" y="0" width="4" height="16" fill="url(#rg)"/><path d="M3.5 4.5 Q1 8 3.5 11.5" stroke="#c04030" stroke-width="2" fill="none" /><path d="M12.5 4.5 Q15 8 12.5 11.5" stroke="#c04030" stroke-width="2" fill="none" /></svg><svg style="position:absolute;left:953px;top:116px" width="17" height="42" viewBox="0 0 17 42"><rect x="1" y="0" width="15" height="42" fill="#eaeae4"/><defs><linearGradient id="ag" x1="0" y1="0" x2="1" y2="0.6"><stop offset="0" stop-color="#f4eca0"/><stop offset="0.55" stop-color="#c8c040"/><stop offset="1" stop-color="#202008"/></linearGradient><linearGradient id="ag2" x1="0" y1="0" x2="1" y2="1"><stop offset="0" stop-color="#202008"/><stop offset="0.45" stop-color="#c0b838"/><stop offset="1" stop-color="#f0e890"/></linearGradient></defs><path d="M8.5 1 L15 18 Q8.5 13 2 18 Z" stroke="none" stroke-width="0" fill="url(#ag)" /><path d="M2 24 Q8.5 29 15 24 L8.5 41 Z" stroke="none" stroke-width="0" fill="url(#ag2)" /></svg><svg style="position:absolute;left:955px;top:164px" width="14" height="15" viewBox="0 0 14 15"><path d="M3 6 L3 3.5 Q3.5 1.2 6.5 1.2 Q9.3 1.2 10.2 3.2" stroke="#000" stroke-width="1.7" fill="none" /><rect x="1" y="5" width="12" height="9" fill="#000"/><rect x="2" y="6" width="10" height="7" fill="#f8f480"/><rect x="1" y="13" width="1" height="1" fill="#f0f0f0"/><rect x="12" y="13" width="1" height="1" fill="#f0f0f0"/><rect x="6" y="7" width="2" height="5" fill="#000"/><rect x="5" y="8" width="4" height="2" fill="#000"/></svg><svg style="position:absolute;left:953px;top:186px" width="19" height="1" viewBox="0 0 19 1"><rect x="0" y="0" width="19" height="1" fill="#a0a0a0"/></svg><svg style="position:absolute;left:954px;top:194px" width="15" height="17" viewBox="0 0 15 17" shape-rendering="crispEdges"><rect x="0" y="0" width="15" height="17" fill="#e8e8e0"/><rect x="2" y="5" width="9" height="2" fill="#000"/><rect x="2" y="9" width="9" height="2" fill="#000"/><rect x="2" y="7" width="9" height="1" fill="#f8f4a0"/></svg><svg style="position:absolute;left:954px;top:217px" width="16" height="17" viewBox="0 0 16 17"><path d="M1.5 1 L1.5 15.5 L15 15.5" stroke="#000060" stroke-width="1.4" fill="none" /><rect x="0" y="0" width="3" height="2" fill="#000060"/><path d="M2.5 11 L5 10 L6.5 8 L8 4 L9.5 8 L11 10 L13 11" stroke="#c01080" stroke-width="1" fill="none" /><path d="M15 2 Q12 1 12 3.5 Q12 6 15 5" stroke="#c01040" stroke-width="2" fill="none" /></svg><svg style="position:absolute;left:951px;top:237px" width="21" height="20" viewBox="0 0 21 20" shape-rendering="crispEdges"><rect x="0" y="0" width="21" height="1" fill="#a0a0a0"/><rect x="0" y="0" width="1" height="20" fill="#a0a0a0"/><rect x="1" y="1" width="20" height="19" fill="#f8f8f8"/></svg><svg style="position:absolute;left:956px;top:243px" width="13" height="13" viewBox="0 0 13 13" shape-rendering="crispEdges"><rect x="0" y="0" width="13" height="13" fill="#000"/><rect x="2" y="2" width="9" height="9" fill="#f8f480"/><rect x="2" y="1" width="1" height="1" fill="#f8f480"/><rect x="2" y="11" width="1" height="1" fill="#f8f480"/><rect x="1" y="2" width="1" height="1" fill="#f8f480"/><rect x="11" y="2" width="1" height="1" fill="#f8f480"/><rect x="4" y="1" width="1" height="1" fill="#f8f480"/><rect x="4" y="11" width="1" height="1" fill="#f8f480"/><rect x="1" y="4" width="1" height="1" fill="#f8f480"/><rect x="11" y="4" width="1" height="1" fill="#f8f480"/><rect x="6" y="1" width="1" height="1" fill="#f8f480"/><rect x="6" y="11" width="1" height="1" fill="#f8f480"/><rect x="1" y="6" width="1" height="1" fill="#f8f480"/><rect x="11" y="6" width="1" height="1" fill="#f8f480"/><rect x="8" y="1" width="1" height="1" fill="#f8f480"/><rect x="8" y="11" width="1" height="1" fill="#f8f480"/><rect x="1" y="8" width="1" height="1" fill="#f8f480"/><rect x="11" y="8" width="1" height="1" fill="#f8f480"/><rect x="10" y="1" width="1" height="1" fill="#f8f480"/><rect x="10" y="11" width="1" height="1" fill="#f8f480"/><rect x="1" y="10" width="1" height="1" fill="#f8f480"/><rect x="11" y="10" width="1" height="1" fill="#f8f480"/></svg><svg style="position:absolute;left:955px;top:265px" width="14" height="13" viewBox="0 0 14 13" shape-rendering="crispEdges"><rect x="0" y="0" width="13" height="12" fill="#fcfcfc"/><rect x="8" y="0" width="1" height="1" fill="#909090"/><rect x="10" y="0" width="1" height="1" fill="#909090"/><rect x="12" y="0" width="1" height="1" fill="#909090"/><rect x="6" y="2" width="1" height="1" fill="#909090"/><rect x="8" y="2" width="1" height="1" fill="#909090"/><rect x="10" y="2" width="1" height="1" fill="#909090"/><rect x="12" y="2" width="1" height="1" fill="#a8a8a8"/><rect x="11" y="3" width="1" height="1" fill="#a8a8a8"/><rect x="12" y="3" width="1" height="1" fill="#8a8a8a"/><rect x="4" y="4" width="1" height="1" fill="#909090"/><rect x="6" y="4" width="1" height="1" fill="#909090"/><rect x="8" y="4" width="1" height="1" fill="#909090"/><rect x="10" y="4" width="1" height="1" fill="#a8a8a8"/><rect x="11" y="4" width="1" height="1" fill="#8a8a8a"/><rect x="12" y="4" width="1" height="1" fill="#a8a8a8"/><rect x="9" y="5" width="1" height="1" fill="#a8a8a8"/><rect x="10" y="5" width="1" height="1" fill="#8a8a8a"/><rect x="11" y="5" width="1" height="1" fill="#a8a8a8"/><rect x="12" y="5" width="1" height="1" fill="#8a8a8a"/><rect x="2" y="6" width="1" height="1" fill="#909090"/><rect x="4" y="6" width="1" height="1" fill="#909090"/><rect x="6" y="6" width="1" height="1" fill="#909090"/><rect x="8" y="6" width="1" height="1" fill="#a8a8a8"/><rect x="9" y="6" width="1" height="1" fill="#8a8a8a"/><rect x="10" y="6" width="1" height="1" fill="#a8a8a8"/><rect x="11" y="6" width="1" height="1" fill="#8a8a8a"/><rect x="12" y="6" width="1" height="1" fill="#a8a8a8"/><rect x="7" y="7" width="1" height="1" fill="#a8a8a8"/><rect x="8" y="7" width="1" height="1" fill="#8a8a8a"/><rect x="9" y="7" width="1" height="1" fill="#a8a8a8"/><rect x="10" y="7" width="1" height="1" fill="#8a8a8a"/><rect x="11" y="7" width="1" height="1" fill="#a8a8a8"/><rect x="12" y="7" width="1" height="1" fill="#8a8a8a"/><rect x="0" y="8" width="1" height="1" fill="#909090"/><rect x="2" y="8" width="1" height="1" fill="#909090"/><rect x="4" y="8" width="1" height="1" fill="#909090"/><rect x="6" y="8" width="1" height="1" fill="#a8a8a8"/><rect x="7" y="8" width="1" height="1" fill="#8a8a8a"/><rect x="8" y="8" width="1" height="1" fill="#a8a8a8"/><rect x="9" y="8" width="1" height="1" fill="#8a8a8a"/><rect x="10" y="8" width="1" height="1" fill="#a8a8a8"/><rect x="11" y="8" width="1" height="1" fill="#8a8a8a"/><rect x="12" y="8" width="1" height="1" fill="#a8a8a8"/><rect x="5" y="9" width="1" height="1" fill="#a8a8a8"/><rect x="6" y="9" width="1" height="1" fill="#8a8a8a"/><rect x="7" y="9" width="1" height="1" fill="#a8a8a8"/><rect x="8" y="9" width="1" height="1" fill="#8a8a8a"/><rect x="9" y="9" width="1" height="1" fill="#a8a8a8"/><rect x="10" y="9" width="1" height="1" fill="#8a8a8a"/><rect x="11" y="9" width="1" height="1" fill="#a8a8a8"/><rect x="12" y="9" width="1" height="1" fill="#8a8a8a"/><rect x="0" y="10" width="1" height="1" fill="#909090"/><rect x="2" y="10" width="1" height="1" fill="#909090"/><rect x="4" y="10" width="1" height="1" fill="#a8a8a8"/><rect x="5" y="10" width="1" height="1" fill="#8a8a8a"/><rect x="6" y="10" width="1" height="1" fill="#a8a8a8"/><rect x="7" y="10" width="1" height="1" fill="#8a8a8a"/><rect x="8" y="10" width="1" height="1" fill="#a8a8a8"/><rect x="9" y="10" width="1" height="1" fill="#8a8a8a"/><rect x="10" y="10" width="1" height="1" fill="#a8a8a8"/><rect x="11" y="10" width="1" height="1" fill="#8a8a8a"/><rect x="12" y="10" width="1" height="1" fill="#a8a8a8"/><rect x="3" y="11" width="1" height="1" fill="#a8a8a8"/><rect x="4" y="11" width="1" height="1" fill="#8a8a8a"/><rect x="5" y="11" width="1" height="1" fill="#a8a8a8"/><rect x="6" y="11" width="1" height="1" fill="#8a8a8a"/><rect x="7" y="11" width="1" height="1" fill="#a8a8a8"/><rect x="8" y="11" width="1" height="1" fill="#8a8a8a"/><rect x="9" y="11" width="1" height="1" fill="#a8a8a8"/><rect x="10" y="11" width="1" height="1" fill="#8a8a8a"/><rect x="11" y="11" width="1" height="1" fill="#a8a8a8"/><rect x="12" y="11" width="1" height="1" fill="#8a8a8a"/><rect x="0" y="12" width="14" height="1" fill="#000"/><rect x="13" y="0" width="1" height="13" fill="#000"/><rect x="12" y="1" width="1" height="2" fill="#000"/></svg><svg style="position:absolute;left:956px;top:287px" width="12" height="13" viewBox="0 0 12 13"><path d="M1 1 L10.5 11.5" stroke="#000" stroke-width="2" fill="none" /></svg><svg style="position:absolute;left:957px;top:311px" width="11" height="11" viewBox="0 0 11 11"><text x="0" y="10" font-family="Liberation Sans" font-weight="bold" font-size="12" fill="#000">A</text></svg><svg style="position:absolute;left:953px;top:333px" width="17" height="14" viewBox="0 0 17 14"><rect x="2" y="2" width="14" height="11" fill="#b0a8e0"/><rect x="2" y="2" width="14" height="1" fill="#d8d0f8"/><rect x="2" y="12" width="14" height="1" fill="#7870b0"/><rect x="3" y="0" width="4" height="3" fill="#b0a8e0"/><circle cx="10" cy="7.5" r="4" fill="#40a8e8" stroke="#f0f0ff" stroke-width="1.2"/><rect x="13" y="3" width="2" height="1" fill="#fff"/></svg><svg style="position:absolute;left:953px;top:355px" width="19" height="1" viewBox="0 0 19 1"><rect x="0" y="0" width="19" height="1" fill="#a0a0a0"/></svg><svg style="position:absolute;left:954px;top:363px" width="15" height="17" viewBox="0 0 15 17"><defs><clipPath id="rc"><path d="M0 17 L0 6 Q0 0 7.5 0 Q15 0 15 6 L15 17 Z"/></clipPath></defs><g clip-path="url(#rc)"><rect x="0" y="0" width="15" height="2" fill="#e04030"/><rect x="0" y="2" width="15" height="2" fill="#f09040"/><rect x="0" y="4" width="15" height="2" fill="#e8e040"/><rect x="0" y="6" width="15" height="2" fill="#60c060"/><rect x="0" y="8" width="15" height="2" fill="#40a8a0"/><rect x="0" y="10" width="15" height="2" fill="#3050d0"/><rect x="0" y="12" width="15" height="2" fill="#6030a0"/><rect x="0" y="14" width="15" height="3" fill="#f0a0f0"/></g></svg>
<div style="position:absolute;left:0px;top:0px;width:986px;height:1px;background:#7d90ad;"></div>
<div style="position:absolute;left:0px;top:0px;width:1px;height:629px;background:#7d90ad;"></div>
<div style="position:absolute;left:985px;top:0px;width:1px;height:629px;background:#7d90ad;"></div>
<div style="position:absolute;left:0px;top:628px;width:986px;height:1px;background:#7d90ad;"></div>
<svg style="position:absolute;left:0;top:0" width="986" height="629"><rect x="8" y="578" width="2" height="1" fill="#000"/><rect x="8" y="560" width="2" height="1" fill="#000"/><rect x="8" y="542" width="2" height="1" fill="#000"/><rect x="8" y="524" width="2" height="1" fill="#000"/><rect x="8" y="506" width="4" height="1" fill="#000"/><rect x="8" y="489" width="2" height="1" fill="#000"/><rect x="8" y="471" width="2" height="1" fill="#000"/><rect x="8" y="453" width="2" height="1" fill="#000"/><rect x="8" y="435" width="2" height="1" fill="#000"/><rect x="8" y="417" width="4" height="1" fill="#000"/><rect x="8" y="400" width="2" height="1" fill="#000"/><rect x="8" y="382" width="2" height="1" fill="#000"/><rect x="8" y="364" width="2" height="1" fill="#000"/><rect x="8" y="346" width="2" height="1" fill="#000"/><rect x="8" y="328" width="4" height="1" fill="#000"/><rect x="8" y="311" width="2" height="1" fill="#000"/><rect x="8" y="293" width="2" height="1" fill="#000"/><rect x="8" y="275" width="2" height="1" fill="#000"/><rect x="8" y="257" width="2" height="1" fill="#000"/><rect x="8" y="239" width="4" height="1" fill="#000"/><rect x="8" y="222" width="2" height="1" fill="#000"/><rect x="8" y="204" width="2" height="1" fill="#000"/><rect x="8" y="186" width="2" height="1" fill="#000"/><rect x="8" y="168" width="2" height="1" fill="#000"/><rect x="8" y="150" width="4" height="1" fill="#000"/><rect x="8" y="133" width="2" height="1" fill="#000"/><rect x="19" y="593" width="1" height="1" fill="#000"/><rect x="32" y="593" width="1" height="1" fill="#000"/><rect x="44" y="593" width="1" height="1" fill="#000"/><rect x="57" y="593" width="1" height="1" fill="#000"/><rect x="70" y="591" width="1" height="3" fill="#000"/><rect x="82" y="593" width="1" height="1" fill="#000"/><rect x="94" y="593" width="1" height="1" fill="#000"/><rect x="107" y="593" width="1" height="1" fill="#000"/><rect x="119" y="593" width="1" height="1" fill="#000"/><rect x="132" y="593" width="1" height="1" fill="#000"/><rect x="144" y="593" width="1" height="1" fill="#000"/><rect x="157" y="593" width="1" height="1" fill="#000"/><rect x="169" y="593" width="1" height="1" fill="#000"/><rect x="182" y="593" width="1" height="1" fill="#000"/><rect x="195" y="591" width="1" height="3" fill="#000"/><rect x="207" y="593" width="1" height="1" fill="#000"/><rect x="219" y="593" width="1" height="1" fill="#000"/><rect x="232" y="593" width="1" height="1" fill="#000"/><rect x="244" y="593" width="1" height="1" fill="#000"/><rect x="257" y="593" width="1" height="1" fill="#000"/><rect x="269" y="593" width="1" height="1" fill="#000"/><rect x="282" y="593" width="1" height="1" fill="#000"/><rect x="294" y="593" width="1" height="1" fill="#000"/><rect x="307" y="593" width="1" height="1" fill="#000"/><rect x="320" y="591" width="1" height="3" fill="#000"/><rect x="332" y="593" width="1" height="1" fill="#000"/><rect x="344" y="593" width="1" height="1" fill="#000"/><rect x="357" y="593" width="1" height="1" fill="#000"/><rect x="369" y="593" width="1" height="1" fill="#000"/><rect x="382" y="593" width="1" height="1" fill="#000"/><rect x="394" y="593" width="1" height="1" fill="#000"/><rect x="407" y="593" width="1" height="1" fill="#000"/><rect x="419" y="593" width="1" height="1" fill="#000"/><rect x="432" y="593" width="1" height="1" fill="#000"/><rect x="445" y="591" width="1" height="3" fill="#000"/><rect x="457" y="593" width="1" height="1" fill="#000"/><rect x="469" y="593" width="1" height="1" fill="#000"/><rect x="482" y="593" width="1" height="1" fill="#000"/><rect x="494" y="593" width="1" height="1" fill="#000"/><rect x="507" y="593" width="1" height="1" fill="#000"/><rect x="519" y="593" width="1" height="1" fill="#000"/><rect x="532" y="593" width="1" height="1" fill="#000"/><rect x="544" y="593" width="1" height="1" fill="#000"/><rect x="557" y="593" width="1" height="1" fill="#000"/><rect x="570" y="591" width="1" height="3" fill="#000"/><rect x="582" y="593" width="1" height="1" fill="#000"/><rect x="594" y="593" width="1" height="1" fill="#000"/><rect x="607" y="593" width="1" height="1" fill="#000"/><rect x="619" y="593" width="1" height="1" fill="#000"/><rect x="632" y="593" width="1" height="1" fill="#000"/><rect x="644" y="593" width="1" height="1" fill="#000"/><rect x="657" y="593" width="1" height="1" fill="#000"/><rect x="669" y="593" width="1" height="1" fill="#000"/><rect x="682" y="593" width="1" height="1" fill="#000"/><rect x="695" y="591" width="1" height="3" fill="#000"/><rect x="707" y="593" width="1" height="1" fill="#000"/><rect x="719" y="593" width="1" height="1" fill="#000"/><rect x="732" y="593" width="1" height="1" fill="#000"/><rect x="744" y="593" width="1" height="1" fill="#000"/><rect x="757" y="593" width="1" height="1" fill="#000"/><rect x="769" y="593" width="1" height="1" fill="#000"/><rect x="782" y="593" width="1" height="1" fill="#000"/><rect x="794" y="593" width="1" height="1" fill="#000"/><rect x="807" y="593" width="1" height="1" fill="#000"/><rect x="820" y="591" width="1" height="3" fill="#000"/><rect x="832" y="593" width="1" height="1" fill="#000"/><rect x="844" y="593" width="1" height="1" fill="#000"/><rect x="857" y="593" width="1" height="1" fill="#000"/><rect x="869" y="593" width="1" height="1" fill="#000"/><rect x="882" y="593" width="1" height="1" fill="#000"/><rect x="894" y="593" width="1" height="1" fill="#000"/><rect x="907" y="593" width="1" height="1" fill="#000"/><rect x="919" y="593" width="1" height="1" fill="#000"/><rect x="932" y="593" width="1" height="1" fill="#000"/><path d="M8.2 413.0 L10.1 430.8 L12.6 445.4 L16.4 445.4 L20.2 422.0 L22.8 409.2 L25.3 398.4 L29.1 411.1 L34.2 402.9 L36.1 404.1 L40.6 394.6 L44.4 405.4 L46.9 412.4 L47.6 406.7 L51.4 416.8 L55.2 415.6 L59.6 421.9 L62.2 419.4 L64.4 410.5 L66.4 413.7 L68.9 408.0 L71.4 409.9 L74.0 420.7 L75.2 420.4 L79.0 430.2 L85.4 418.1 L86.7 404.1 L88.0 414.3 L90.5 403.5 L94.3 410.5 L98.1 410.5 L99.4 398.4 L101.3 399.7 L103.2 397.8 L107.0 427.0 L110.2 430.8 L112.7 442.3 L115.9 422.0 L117.5 411.8 L120.1 406.7 L122.6 406.7 L124.1 402.9 L125.2 409.2 L130.2 442.3 L132.8 446.1 L135.3 450.5 L137.9 430.8 L139.8 408.0 L141.7 397.2 L143.6 394.6 L145.5 397.8 L148.7 406.7 L150.6 400.3 L151.2 404.8 L156.3 392.0 L158.8 379.3 L160.7 365.0 L163.0 364.0 L168.4 336.3 L169.9 336.3 L172.2 329.7 L175.6 324.9 L177.9 304.8 L181.3 294.4 L183.2 299.1 L185.5 288.6 L188.1 269.3 L190.0 237.8 L192.9 222.5 L194.8 195.8 L196.7 169.1 L198.2 161.5 L200.2 164.3 L201.5 171.0 L204.4 203.4 L205.9 224.4 L207.8 269.3 L208.0 288.6 L209.4 330.0 L210.1 341.4 L210.7 363.0 L212.0 379.6 L213.9 396.1 L216.2 406.2 L218.3 403.7 L220.2 406.2 L224.7 397.3 L227.9 374.5 L229.1 358.0 L230.2 342.7 L231.4 321.8 L232.8 305.2 L234.1 297.0 L235.5 284.5 L237.6 268.0 L239.0 255.5 L240.7 249.3 L242.4 227.6 L244.4 224.5 L246.5 227.6 L249.0 243.1 L251.1 252.4 L254.2 254.5 L258.3 280.4 L260.4 283.5 L263.5 305.2 L266.6 312.5 L269.7 322.8 L271.8 323.9 L274.8 331.1 L277.9 330.3 L281.1 343.8 L285.9 356.6 L289.1 369.3 L292.3 383.6 L294.6 397.9 L297.8 400.3 L301.8 395.5 L308.2 392.3 L310.5 396.3 L313.2 402.7 L315.3 396.3 L319.3 401.1 L325.0 391.9 L329.0 387.2 L331.4 391.9 L333.0 411.8 L335.3 443.6 L339.3 464.3 L342.5 453.1 L344.1 448.4 L346.5 416.6 L348.1 415.0 L350.4 422.1 L352.0 421.3 L356.0 443.6 L358.4 446.8 L359.7 452.3 L361.6 446.8 L364.7 450.0 L367.6 464.3 L370.3 459.5 L372.7 446.8 L375.9 421.3 L380.6 408.6 L384.6 415.0 L385.4 432.5 L387.0 419.7 L389.4 417.4 L393.4 399.9 L395.7 405.4 L398.1 406.2 L402.1 415.8 L404.8 413.4 L406.7 413.4 L408.7 403.8 L411.1 416.6 L412.7 414.2 L416.7 421.3 L418.3 422.1 L421.5 408.6 L423.1 412.6 L424.6 408.6 L427.0 415.0 L428.6 414.2 L431.8 420.5 L433.4 418.2 L435.8 423.7 L438.2 427.7 L443.7 457.9 L447.7 440.4 L452.5 410.2 L454.8 406.2 L458.0 411.8 L460.4 405.4 L462.8 416.6 L467.6 417.4 L471.5 412.6 L473.1 414.2 L476.3 408.6 L479.0 409.7 L482.2 401.8 L484.5 412.1 L486.1 412.1 L488.5 403.4 L490.9 408.2 L493.3 401.8 L497.3 405.0 L501.2 419.3 L503.6 421.7 L506.8 437.6 L508.4 436.8 L513.2 423.3 L516.3 420.9 L520.3 400.2 L522.7 397.8 L525.9 396.2 L527.5 400.2 L529.8 393.0 L532.2 400.2 L534.6 398.6 L537.0 401.0 L539.4 398.6 L541.8 400.2 L544.2 403.4 L545.7 404.2 L548.9 411.3 L551.3 401.8 L555.6 396.2 L557.9 395.4 L561.1 388.3 L562.4 389.1 L564.3 403.4 L565.9 401.0 L567.5 407.4 L569.1 409.7 L571.5 416.1 L573.8 406.6 L577.0 410.5 L579.4 412.1 L581.8 420.9 L585.8 445.5 L590.5 447.1 L593.7 451.1 L596.1 446.3 L599.3 458.2 L601.7 451.9 L603.3 459.0 L608.8 440.0 L611.2 435.2 L614.4 420.9 L618.4 430.4 L621.5 423.3 L625.5 416.1 L627.1 420.9 L631.7 404.2 L634.5 411.3 L637.7 412.9 L640.1 405.8 L642.5 416.9 L644.9 421.7 L646.5 420.1 L648.8 428.8 L652.8 409.7 L654.4 408.2 L657.6 409.0 L659.2 413.7 L662.4 454.3 L664.7 452.7 L670.3 451.9 L674.3 425.6 L676.7 419.3 L679.0 407.4 L681.4 416.1 L684.6 415.3 L687.8 417.7 L690.2 418.5 L692.6 412.9 L695.7 412.9 L698.9 397.0 L701.3 404.2 L704.0 406.6 L707.2 418.5 L710.3 416.9 L711.9 417.7 L716.7 432.0 L719.1 431.2 L722.3 424.8 L724.6 413.7 L727.8 408.2 L731.0 415.3 L735.0 436.8 L738.2 426.4 L740.5 432.0 L742.1 430.4 L744.5 415.3 L746.9 420.9 L749.3 435.2 L751.7 444.7 L754.8 443.1 L758.0 432.8 L759.6 432.0 L762.8 417.7 L765.2 424.1 L768.4 417.7 L772.3 417.7 L774.7 430.4 L777.1 443.1 L779.8 438.4 L782.2 438.4 L785.3 424.1 L787.7 419.3 L789.6 420.9 L792.5 459.0 L795.7 459.0 L798.8 461.4 L802.0 455.9 L805.2 433.6 L806.8 440.7 L809.2 424.1 L810.8 433.6 L813.2 421.7 L815.5 410.5 L818.7 421.7 L823.5 414.5 L825.9 420.9 L828.3 413.7 L829.8 426.4 L832.2 418.5 L835.4 412.9 L837.3 419.3 L839.4 403.4 L841.8 419.3 L845.7 436.8 L850.5 461.4 L852.9 460.6 L855.6 444.7 L858.7 440.0 L861.1 425.6 L863.5 412.1 L866.7 420.1 L869.1 420.9 L874.6 422.5 L876.2 424.8 L878.6 417.7 L881.0 424.1 L883.4 412.1 L887.4 417.7 L889.4 428.8 L891.7 412.9 L893.2 424.8 L895.3 413.7 L898.5 409.7 L900.9 420.9 L902.5 419.3 L908.0 432.0 L909.6 428.0 L912.0 438.4 L914.4 437.6 L917.6 445.5 L919.2 443.1 L920.7 424.8 L922.3 428.0 L924.7 420.1 L927.1 430.4 L928.7 432.0 L930.8 443.1 L933.5 425.6 L936.6 425.6 L938.2 424.8 L942.2 429.6 L943.0 425.6" fill="none" stroke="#10109c" stroke-width="1" shape-rendering="crispEdges"/></svg>
<div style="position:absolute;left:14px;top:146px;font-family:'Liberation Sans', sans-serif;font-size:11px;line-height:1;color:#000;white-space:pre;letter-spacing:1.2px;">2.5</div>
<div style="position:absolute;left:14px;top:235px;font-family:'Liberation Sans', sans-serif;font-size:11px;line-height:1;color:#000;white-space:pre;letter-spacing:1.2px;">2</div>
<div style="position:absolute;left:14px;top:324px;font-family:'Liberation Sans', sans-serif;font-size:11px;line-height:1;color:#000;white-space:pre;letter-spacing:1.2px;">1.5</div>
<div style="position:absolute;left:14px;top:413px;font-family:'Liberation Sans', sans-serif;font-size:11px;line-height:1;color:#000;white-space:pre;letter-spacing:1.2px;">1</div>
<div style="position:absolute;left:14px;top:502px;font-family:'Liberation Sans', sans-serif;font-size:11px;line-height:1;color:#000;white-space:pre;letter-spacing:1.2px;">0.5</div>
<div style="position:absolute;left:58px;top:579px;font-family:'Liberation Sans', sans-serif;font-size:11px;line-height:1;color:#000;white-space:pre;letter-spacing:1px;">6550</div>
<div style="position:absolute;left:183px;top:579px;font-family:'Liberation Sans', sans-serif;font-size:11px;line-height:1;color:#000;white-space:pre;letter-spacing:1px;">6560</div>
<div style="position:absolute;left:308px;top:579px;font-family:'Liberation Sans', sans-serif;font-size:11px;line-height:1;color:#000;white-space:pre;letter-spacing:1px;">6570</div>
<div style="position:absolute;left:433px;top:579px;font-family:'Liberation Sans', sans-serif;font-size:11px;line-height:1;color:#000;white-space:pre;letter-spacing:1px;">6580</div>
<div style="position:absolute;left:558px;top:579px;font-family:'Liberation Sans', sans-serif;font-size:11px;line-height:1;color:#000;white-space:pre;letter-spacing:1px;">6590</div>
<div style="position:absolute;left:683px;top:579px;font-family:'Liberation Sans', sans-serif;font-size:11px;line-height:1;color:#000;white-space:pre;letter-spacing:1px;">6600</div>
<div style="position:absolute;left:808px;top:579px;font-family:'Liberation Sans', sans-serif;font-size:11px;line-height:1;color:#000;white-space:pre;letter-spacing:1px;">6610</div>
</body></html>
